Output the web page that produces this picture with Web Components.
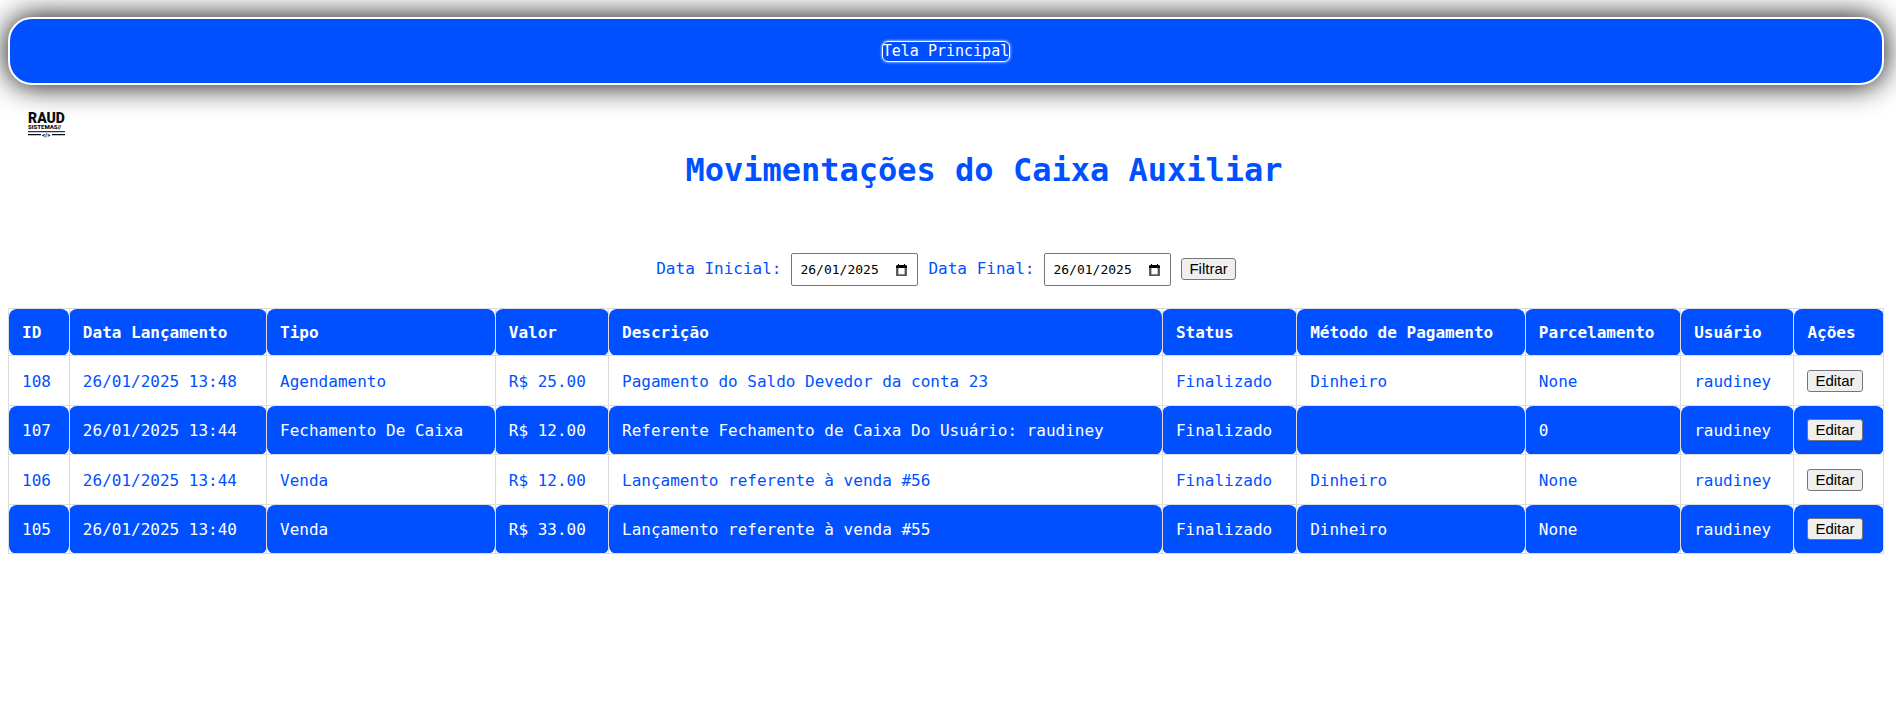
<!DOCTYPE html>
<html lang="pt-BR">
<head>
<meta charset="utf-8">
<title>Movimentações do Caixa Auxiliar</title>
<style>
  body {
    margin: 0;
    padding: 17px 12px 8px 8px;
    background: #fff;
    color: #0050ff;
    font: 16px/18px Consolas, "DejaVu Sans Mono", monospace;
  }
</style>
</head>
<body>
<nav-bar><nav-link href="#principal">Tela Principal</nav-link></nav-bar>
<page-header>Movimentações do Caixa Auxiliar</page-header>
<date-filter start="26/01/2025" end="26/01/2025"></date-filter>
<cash-table></cash-table>

<script>
class BaseElement extends HTMLElement {
  render(html) {
    this.attachShadow({ mode: "open" }).innerHTML = html;
  }
}

customElements.define("nav-bar", class extends BaseElement {
  connectedCallback() {
    this.render(`
      <style>
        :host { display: block; }
        nav {
          display: flex; justify-content: center; align-items: center;
          box-sizing: border-box; min-height: 68px; padding: 8px;
          background: #0050ff; border: 2px solid #fff; border-radius: 24px;
          box-shadow: 0 0 30px #000;
        }
      </style>
      <nav><slot></slot></nav>`);
  }
});

customElements.define("nav-link", class extends BaseElement {
  connectedCallback() {
    this.render(`
      <style>
        :host { display: block; }
        a {
          display: block; color: #fff; text-decoration: none;
          font-size: 15px; line-height: 19px;
          border: 1px solid #fff; border-radius: 6px;
          box-shadow: 0 0 3px #fff;
        }
      </style>
      <a href="${this.getAttribute("href")}"><slot></slot></a>`);
  }
});

customElements.define("brand-logo", class extends BaseElement {
  connectedCallback() {
    this.render(`
      <style>
        :host { display: block; }
        svg { display: block; overflow: visible; }
        text { font-family: Roboto, sans-serif; font-weight: 900; fill: #0b0d14; }
      </style>
      <svg width="38" height="26" viewBox="0 0 38 26" role="img" aria-label="Raud Sistemas">
        <text x="0" y="11" font-size="14">RAUD</text>
        <text x="0" y="17" font-size="6">SISTEMAS//</text>
        <path d="M0 19.600H37" stroke="#1d3566" stroke-width="1.400"/>
        <path d="M0 22.600H13M24 22.600H37" stroke="#0b0d14" stroke-width="1.200"/>
        <text x="14" y="25" font-size="6">&lt;/&gt;</text>
      </svg>`);
  }
});

customElements.define("page-header", class extends BaseElement {
  connectedCallback() {
    this.render(`
      <style>
        :host { display: block; }
        header { display: flex; align-items: flex-start; }
        brand-logo { width: 38px; padding: 27px 18px 0 20px; }
        h1 {
          flex: 1; margin: 0; padding: 64px 0 60px;
          font-size: 32px; line-height: 42px; font-weight: bold; text-align: center;
        }
      </style>
      <header><brand-logo></brand-logo><h1><slot></slot></h1></header>`);
  }
});

customElements.define("push-button", class extends BaseElement {
  connectedCallback() {
    this.render(`
      <style>
        :host { display: inline-block; vertical-align: middle; }
        button {
          display: block; margin: 0; padding: 1px 7px;
          font: 15px/18px Arial, "Liberation Sans", sans-serif; color: #000;
          background: #efefef; border: 1px solid #767676; border-radius: 3px;
        }
      </style>
      <button type="button"><slot></slot></button>`);
  }
});

customElements.define("date-box", class extends BaseElement {
  connectedCallback() {
    this.render(`
      <style>
        :host { display: block; }
        label { display: flex; align-items: baseline; gap: 10px; }
        .box {
          display: flex; align-items: center; box-sizing: border-box;
          width: 127px; height: 33px; padding: 0 10px 0 8px;
          border: 1px solid #767676; border-radius: 2px; background: #fff;
        }
        input {
          flex: 1; min-width: 0; padding: 0; border: 0; outline: 0; background: none;
          font: 13px/18px Consolas, "DejaVu Sans Mono", monospace; color: #000;
        }
        svg { flex: none; display: block; }
      </style>
      <label><slot></slot>
        <span class="box">
          <input type="text" inputmode="numeric" value="${this.getAttribute("value")}">
          <svg width="11" height="12" viewBox="0 0 11 12" aria-hidden="true">
            <path d="M1.700 2.500V11.200H9.300V2.500" fill="none" stroke="#444" stroke-width="1.300"/>
            <path d="M2 0h1v1h5V0h1v1h1l1 1v2H0V2l1-1h1z" fill="#000"/>
            <path d="M.7 4V11.300H10.300V4" fill="none" stroke="#555" stroke-width="1.200"/>
          </svg>
        </span>
      </label>`);
  }
});

customElements.define("date-filter", class extends BaseElement {
  connectedCallback() {
    this.render(`
      <style>
        :host { display: block; margin: 2px 0 22px; }
        form { display: flex; justify-content: center; align-items: baseline; gap: 10px; }
      </style>
      <form>
        <date-box value="${this.getAttribute("start")}">Data Inicial:</date-box>
        <date-box value="${this.getAttribute("end")}">Data Final:</date-box>
        <push-button>Filtrar</push-button>
      </form>`);
  }
});

customElements.define("cash-table", class extends BaseElement {
  connectedCallback() {
    const columns = ["ID", "Data Lançamento", "Tipo", "Valor", "Descrição", "Status",
      "Método de Pagamento", "Parcelamento", "Usuário", "Ações"];
    const rows = [
      ["108", "26/01/2025 13:48", "Agendamento", "R$ 25.00", "Pagamento do Saldo Devedor da conta 23", "Finalizado", "Dinheiro", "None", "raudiney"],
      ["107", "26/01/2025 13:44", "Fechamento De Caixa", "R$ 12.00", "Referente Fechamento de Caixa Do Usuário: raudiney", "Finalizado", "", "0", "raudiney"],
      ["106", "26/01/2025 13:44", "Venda", "R$ 12.00", "Lançamento referente à venda #56", "Finalizado", "Dinheiro", "None", "raudiney"],
      ["105", "26/01/2025 13:40", "Venda", "R$ 33.00", "Lançamento referente à venda #55", "Finalizado", "Dinheiro", "None", "raudiney"]
    ];
    this.render(`
      <style>
        :host { display: block; }
        table { width: 100%; border-collapse: collapse; }
        th, td {
          padding: 14px 13px 12px; text-align: left; vertical-align: middle;
          border: 1px solid #ddd; border-radius: 8px;
        }
        th { height: 20px; background: #0050ff; color: #fff; }
        td { height: 22px; }
        td:last-child { padding: 13px; }
        tbody tr:nth-child(odd) td { height: 23px; }
        tbody tr:nth-child(even) td { background: #0050ff; color: #fff; }
      </style>
      <table>
        <thead><tr>${columns.map(c => `<th scope="col">${c}</th>`).join("")}</tr></thead>
        <tbody>${rows.map(r => `<tr>${r.map(c => `<td>${c}</td>`).join("")}<td><push-button>Editar</push-button></td></tr>`).join("")}</tbody>
      </table>`);
  }
});
</script>
</body>
</html>
